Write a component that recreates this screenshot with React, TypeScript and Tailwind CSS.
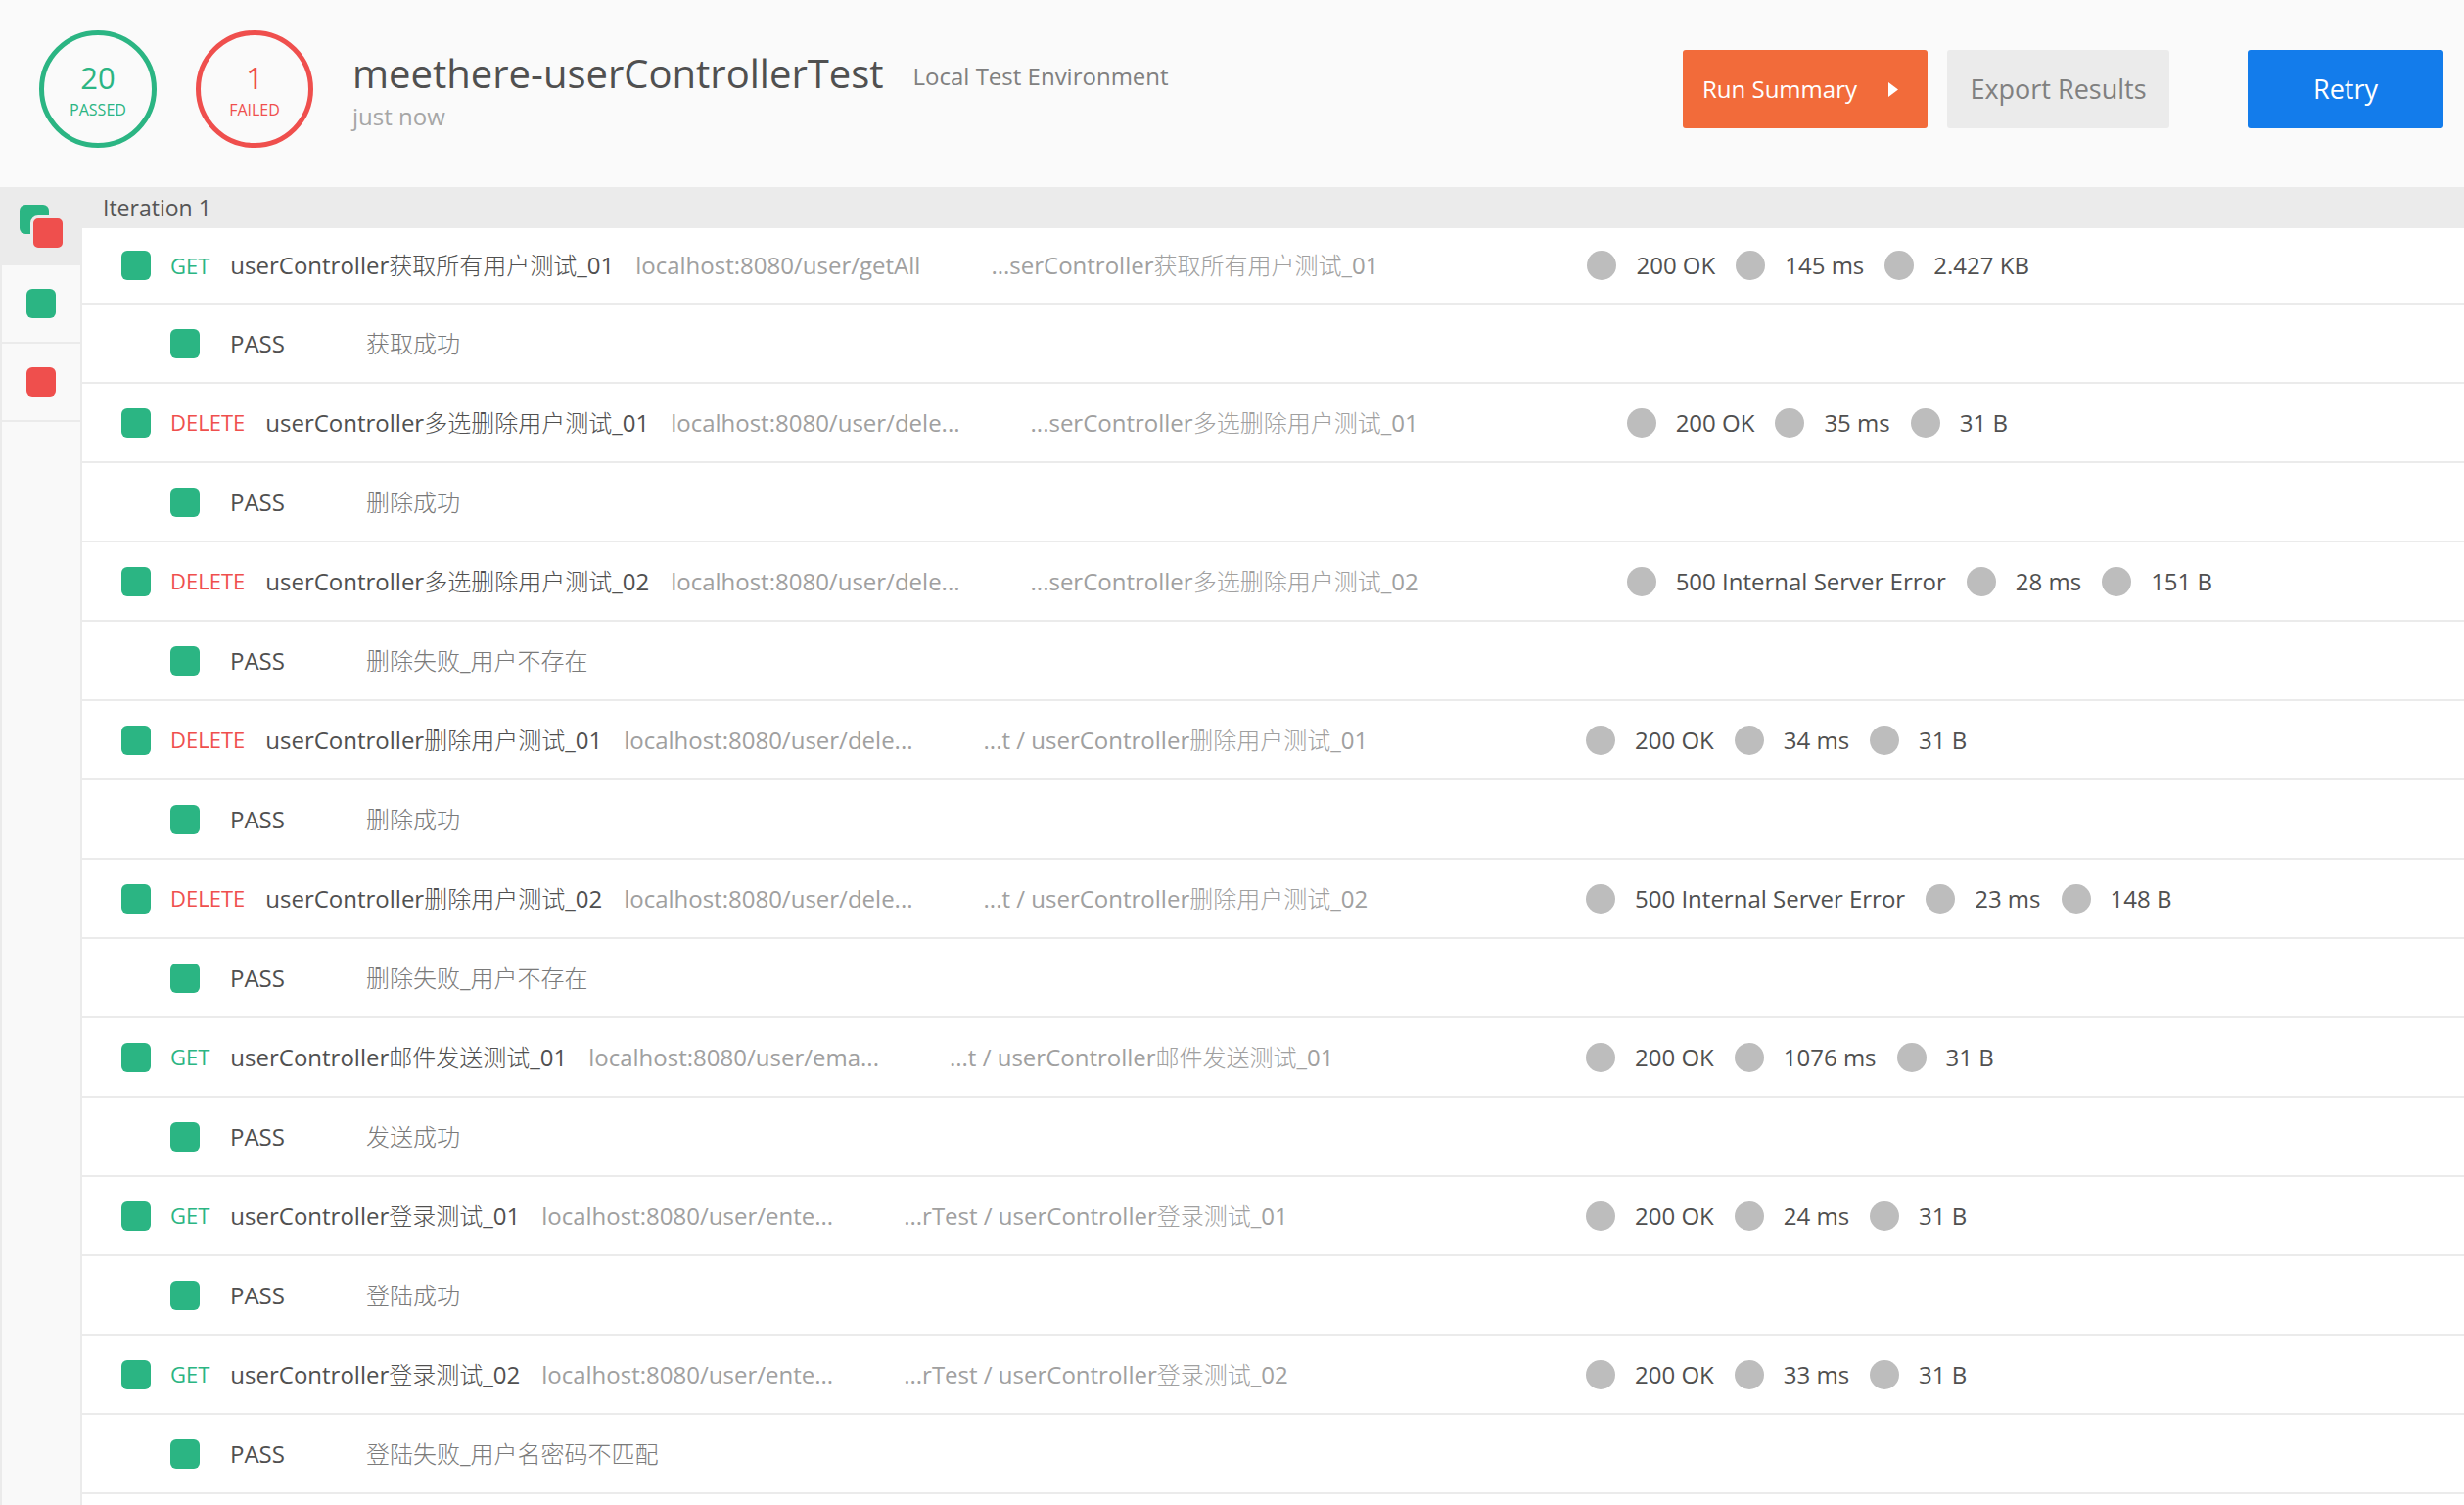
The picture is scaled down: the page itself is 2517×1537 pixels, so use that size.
import React from 'react';

type Request = {
  method: 'GET' | 'DELETE';
  name: string;
  url: string;
  path: string;
  status: string;
  time: string;
  size: string;
  message: string;
};

const requests: Request[] = [
  {
    method: 'GET',
    name: 'userController获取所有用户测试_01',
    url: 'localhost:8080/user/getAll',
    path: '...serController获取所有用户测试_01',
    status: '200 OK',
    time: '145 ms',
    size: '2.427 KB',
    message: '获取成功',
  },
  {
    method: 'DELETE',
    name: 'userController多选删除用户测试_01',
    url: 'localhost:8080/user/dele...',
    path: '...serController多选删除用户测试_01',
    status: '200 OK',
    time: '35 ms',
    size: '31 B',
    message: '删除成功',
  },
  {
    method: 'DELETE',
    name: 'userController多选删除用户测试_02',
    url: 'localhost:8080/user/dele...',
    path: '...serController多选删除用户测试_02',
    status: '500 Internal Server Error',
    time: '28 ms',
    size: '151 B',
    message: '删除失败_用户不存在',
  },
  {
    method: 'DELETE',
    name: 'userController删除用户测试_01',
    url: 'localhost:8080/user/dele...',
    path: '...t / userController删除用户测试_01',
    status: '200 OK',
    time: '34 ms',
    size: '31 B',
    message: '删除成功',
  },
  {
    method: 'DELETE',
    name: 'userController删除用户测试_02',
    url: 'localhost:8080/user/dele...',
    path: '...t / userController删除用户测试_02',
    status: '500 Internal Server Error',
    time: '23 ms',
    size: '148 B',
    message: '删除失败_用户不存在',
  },
  {
    method: 'GET',
    name: 'userController邮件发送测试_01',
    url: 'localhost:8080/user/ema...',
    path: '...t / userController邮件发送测试_01',
    status: '200 OK',
    time: '1076 ms',
    size: '31 B',
    message: '发送成功',
  },
  {
    method: 'GET',
    name: 'userController登录测试_01',
    url: 'localhost:8080/user/ente...',
    path: '...rTest / userController登录测试_01',
    status: '200 OK',
    time: '24 ms',
    size: '31 B',
    message: '登陆成功',
  },
  {
    method: 'GET',
    name: 'userController登录测试_02',
    url: 'localhost:8080/user/ente...',
    path: '...rTest / userController登录测试_02',
    status: '200 OK',
    time: '33 ms',
    size: '31 B',
    message: '登陆失败_用户名密码不匹配',
  },
];

// the Chinese in the original is drawn in a thin face, so CJK runs get a lighter weight
function Mixed({ text }: { text: string }) {
  const parts = text.split(/([\u4e00-\u9fff]+)/).filter(Boolean);
  return (
    <>
      {parts.map((p, i) =>
        /[\u4e00-\u9fff]/.test(p) ? (
          <span key={i} className="font-light">
            {p}
          </span>
        ) : (
          <span key={i}>{p}</span>
        )
      )}
    </>
  );
}

function GreenSquare() {
  return <div className="h-[30px] w-[30px] shrink-0 rounded-[6px] bg-[#2bb583]" />;
}

function Stat({ label }: { label: string }) {
  return (
    <div className="flex items-center">
      <div className="h-[30px] w-[30px] shrink-0 rounded-full bg-[#bdbdbd]" />
      <span className="ml-[20px] mr-[21px] text-[#505050]">{label}</span>
    </div>
  );
}

function RequestRow({ req, first }: { req: Request; first: boolean }) {
  return (
    <>
      <div
        className={
          first
            ? 'flex h-[78px] items-center border-b-2 border-[#ebebeb] pl-[40px] whitespace-nowrap'
            : 'flex h-[81px] items-center border-b-2 border-[#ebebeb] pl-[40px] whitespace-nowrap'
        }
      >
        <div className="flex min-w-[1283px] items-center">
          <GreenSquare />
          <span
            className={
              req.method === 'GET'
                ? 'ml-[20px] text-[22px] text-[#2bb583]'
                : 'ml-[20px] text-[22px] text-[#ef4f4d]'
            }
          >
            {req.method}
          </span>
          <span className="ml-[21px] text-[#505050]">
            <Mixed text={req.name} />
          </span>
          <span className="ml-[22px] mr-[72px] text-[#a0a0a0]">{req.url}</span>
          <span className="text-[#a0a0a0]">
            <Mixed text={req.path} />
          </span>
        </div>
        <div className="ml-[213px] flex items-center">
          <Stat label={req.status} />
          <Stat label={req.time} />
          <Stat label={req.size} />
        </div>
      </div>
      <div className="flex h-[81px] items-center border-b-2 border-[#ebebeb] pl-[90px] whitespace-nowrap">
        <GreenSquare />
        <span className="ml-[31px] w-[139px] shrink-0 text-[#505050]">PASS</span>
        <span className="text-[#7a7a7a]">
          <Mixed text={req.message} />
        </span>
      </div>
    </>
  );
}

function Header() {
  return (
    <div className="flex h-[191px] shrink-0 bg-[#fafafa] pl-[40px] pr-[21px] pt-[31px]">
      <div className="flex h-[120px] w-[120px] shrink-0 flex-col items-center rounded-full border-[5px] border-[#2bb583] pt-[28px] text-[#2bb583]">
        <div className="text-[31px] leading-none">20</div>
        <div className="mt-[9px] text-[16px] leading-none">PASSED</div>
      </div>
      <div className="ml-[40px] flex h-[120px] w-[120px] shrink-0 flex-col items-center rounded-full border-[5px] border-[#ef4f4d] pt-[28px] text-[#ef4f4d]">
        <div className="text-[31px] leading-none">1</div>
        <div className="mt-[9px] text-[16px] leading-none">FAILED</div>
      </div>
      <div className="ml-[40px] mt-[21px] flex flex-col">
        <div className="flex items-end whitespace-nowrap">
          <span className="text-[40px] leading-[46px] text-[#505050]">meethere-userControllerTest</span>
          <span className="mb-[5px] ml-[30px] text-[24px] leading-[30px] text-[#808080]">Local Test Environment</span>
        </div>
        <div className="mt-[6px] text-[24px] leading-[30px] text-[#a6a6a6]">just now</div>
      </div>
      <div className="ml-auto mt-[20px] flex h-[80px]">
        <button className="flex h-[80px] w-[250px] items-center rounded-[3px] bg-[#f26b3a] pl-[20px] text-[24px] text-white">
          <span>Run Summary</span>
          <svg className="ml-auto mr-[30px]" width="10" height="15" viewBox="0 0 10 15">
            <path d="M0 0 L10 7.5 L0 15 Z" fill="#ffffff" />
          </svg>
        </button>
        <button className="ml-[20px] flex h-[80px] w-[227px] items-center justify-center rounded-[3px] bg-[#ebebeb] text-[27px] text-[#808080]">
          Export Results
        </button>
        <button className="ml-[80px] flex h-[80px] w-[200px] items-center justify-center rounded-[3px] bg-[#137ceb] text-[27px] text-white">
          Retry
        </button>
      </div>
    </div>
  );
}

function Sidebar() {
  return (
    <div className="w-[84px] shrink-0 border-l-2 border-r-2 border-[#ebebeb] bg-[#f9f9f9]">
      <div className="flex h-[80px] items-center justify-center bg-[#ebebeb]">
        <div className="relative h-[44px] w-[44px]">
          <div className="absolute left-0 top-0 h-[30px] w-[30px] rounded-[6px] bg-[#2bb583]" />
          <div className="absolute left-[11px] top-[11px] h-[36px] w-[36px] rounded-[8px] border-[3px] border-[#ebebeb] bg-[#ef4f4d]" />
        </div>
      </div>
      <div className="flex h-[80px] items-center justify-center border-b-2 border-[#ebebeb]">
        <GreenSquare />
      </div>
      <div className="flex h-[80px] items-center justify-center border-b-2 border-[#ebebeb]">
        <div className="h-[30px] w-[30px] rounded-[6px] bg-[#ef4f4d]" />
      </div>
    </div>
  );
}

export default function App() {
  return (
    <div className="flex h-screen flex-col overflow-hidden bg-white font-['Open_Sans','Noto_Sans_CJK_SC',sans-serif] text-[24px]">
      <Header />
      <div className="flex flex-1">
        <Sidebar />
        <div className="flex-1">
          <div className="flex h-[42px] items-center bg-[#ebebeb] pl-[21px] text-[23px] text-[#555555]">Iteration 1</div>
          {requests.map((req, i) => (
            <RequestRow key={i} req={req} first={i === 0} />
          ))}
        </div>
      </div>
    </div>
  );
}
